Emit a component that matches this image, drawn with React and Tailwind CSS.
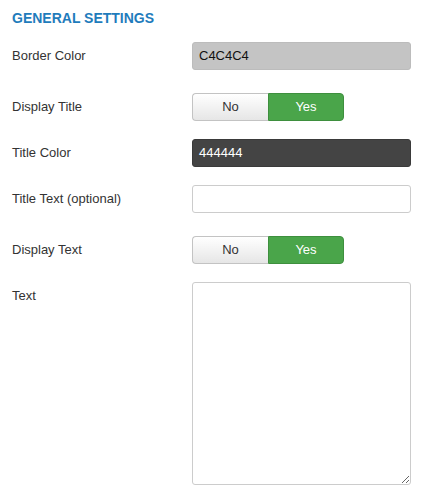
function Row({ label, toggle, children }) {
  return (
    <div className={`flex ${toggle ? "pt-[5px]" : ""} mb-[18px]`}>
      <label className="w-[180px] shrink-0 pt-[5px] leading-[18px] text-[13px] text-[#333]">
        {label}
      </label>
      <div className="w-[220px]">{children}</div>
    </div>
  );
}

function Toggle() {
  return (
    <div className="flex h-[28px] text-[13px]">
      <button className="w-[76px] rounded-l-[4px] border border-[#c3c3c3] border-r-0 bg-gradient-to-b from-white to-[#e6e6e6] text-[#333]">
        No
      </button>
      <button className="w-[76px] rounded-r-[4px] border border-[#3e8f3e] bg-[#4aa54a] text-white">
        Yes
      </button>
    </div>
  );
}

export default function App() {
  return (
    <div className="min-h-[497px] bg-white px-3 pt-[9px] font-['Liberation_Sans',Arial,sans-serif]">
      <h3 className="mb-[15px] text-[14px] font-bold leading-[18px] text-[#1f7cbc]">
        GENERAL SETTINGS
      </h3>
      <Row label="Border Color">
        <div className="h-[28px] rounded-[3px] border border-[#bcbcbc] bg-[#c4c4c4] px-[6px] text-[13px] leading-[26px] text-[#111]">
          C4C4C4
        </div>
      </Row>
      <Row label="Display Title" toggle>
        <Toggle />
      </Row>
      <Row label="Title Color">
        <div className="h-[28px] rounded-[3px] border border-[#3a3a3a] bg-[#444444] px-[6px] text-[13px] leading-[26px] text-white">
          444444
        </div>
      </Row>
      <Row label="Title Text (optional)">
        <input
          type="text"
          className="block h-[28px] w-full rounded-[3px] border border-[#cccccc] bg-white px-[6px] text-[13px] outline-none"
        />
      </Row>
      <Row label="Display Text" toggle>
        <Toggle />
      </Row>
      <Row label="Text">
        <textarea className="block h-[203px] w-full rounded-[3px] border border-[#cccccc] bg-white px-[6px] text-[13px] outline-none" />
      </Row>
    </div>
  );
}
